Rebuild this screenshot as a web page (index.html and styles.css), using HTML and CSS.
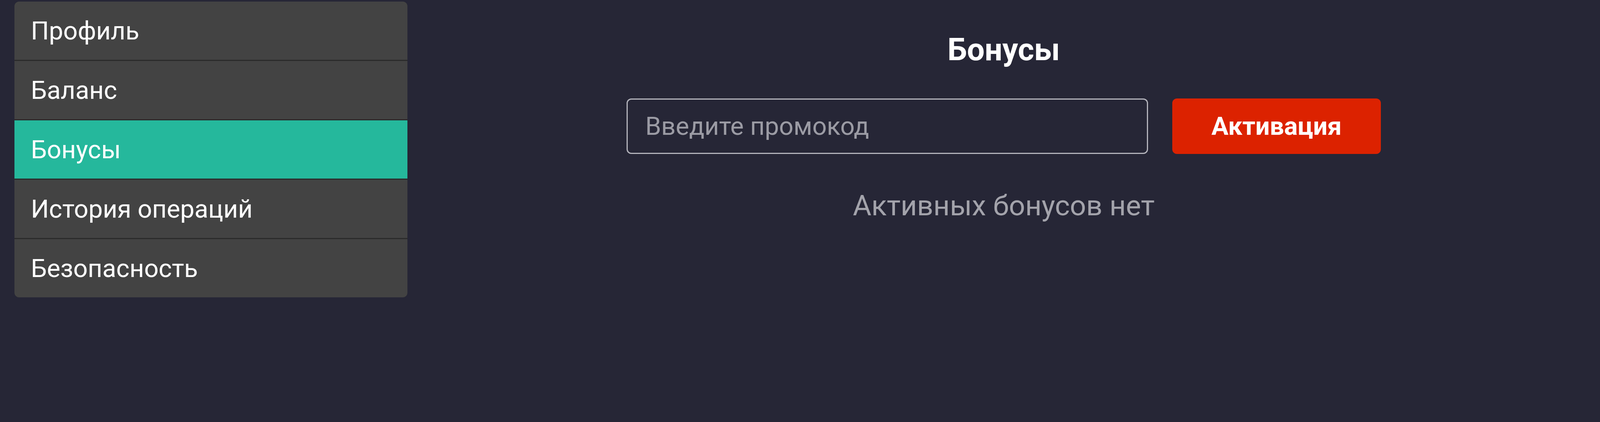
FILE: index.html
```html
<!DOCTYPE html>
<html lang="ru">
<head>
<meta charset="utf-8">
<title>Бонусы</title>
<link rel="stylesheet" href="styles.css">
</head>
<body>
<div class="page">
  <nav class="sidebar">
    <a class="nav-item" href="#">Профиль</a>
    <a class="nav-item" href="#">Баланс</a>
    <a class="nav-item active" href="#">Бонусы</a>
    <a class="nav-item" href="#">История операций</a>
    <a class="nav-item" href="#">Безопасность</a>
  </nav>
  <main class="content">
    <h1 class="title">Бонусы</h1>
    <form class="promo">
      <input class="promo-input" type="text" placeholder="Введите промокод">
      <button class="promo-btn" type="button">Активация</button>
    </form>
    <p class="empty">Активных бонусов нет</p>
  </main>
</div>
</body>
</html>
```
FILE: styles.css
```css
html, body {
  margin: 0;
  padding: 0;
  background: #262636;
  height: 100%;
}
body {
  font-family: Roboto, "Liberation Sans", sans-serif;
  color: #ffffff;
}
.page {
  display: flex;
  align-items: flex-start;
  min-height: 100%;
}
.sidebar {
  margin: 4px 0 0 37px;
  width: 1006px;
  flex: none;
  display: flex;
  flex-direction: column;
  background: #2b2b2b;
  border-radius: 12px;
  overflow: hidden;
  gap: 3px;
}
.nav-item {
  display: flex;
  align-items: center;
  height: 149px;
  padding-left: 42px;
  background: #434343;
  color: #ffffff;
  text-decoration: none;
  font-size: 65px;
}
.nav-item.active {
  background: #25b89c;
}
.content {
  flex: 1;
  display: flex;
  flex-direction: column;
  align-items: center;
  padding-top: 80px;
}
.title {
  margin: 0;
  font-size: 80px;
  font-weight: 700;
  line-height: normal;
}
.promo {
  margin-top: 78px;
  display: flex;
  gap: 62px;
}
.promo-input {
  box-sizing: border-box;
  width: 1335px;
  height: 142px;
  border: 3px solid #b4b4bc;
  border-radius: 12px;
  background: transparent;
  padding: 0 0 0 45px;
  font-family: Roboto, "Liberation Sans", sans-serif;
  font-size: 65px;
  color: #ffffff;
  outline: none;
}
.promo-input::placeholder {
  color: #9b9ba4;
}
.promo-btn {
  box-sizing: border-box;
  width: 534px;
  height: 142px;
  border: none;
  border-radius: 12px;
  background: #dc2200;
  color: #ffffff;
  font-family: Roboto, "Liberation Sans", sans-serif;
  font-size: 65px;
  font-weight: 700;
}
.empty {
  margin: 89px 0 0;
  font-size: 73px;
  line-height: normal;
  color: #a3a3ab;
}
```
